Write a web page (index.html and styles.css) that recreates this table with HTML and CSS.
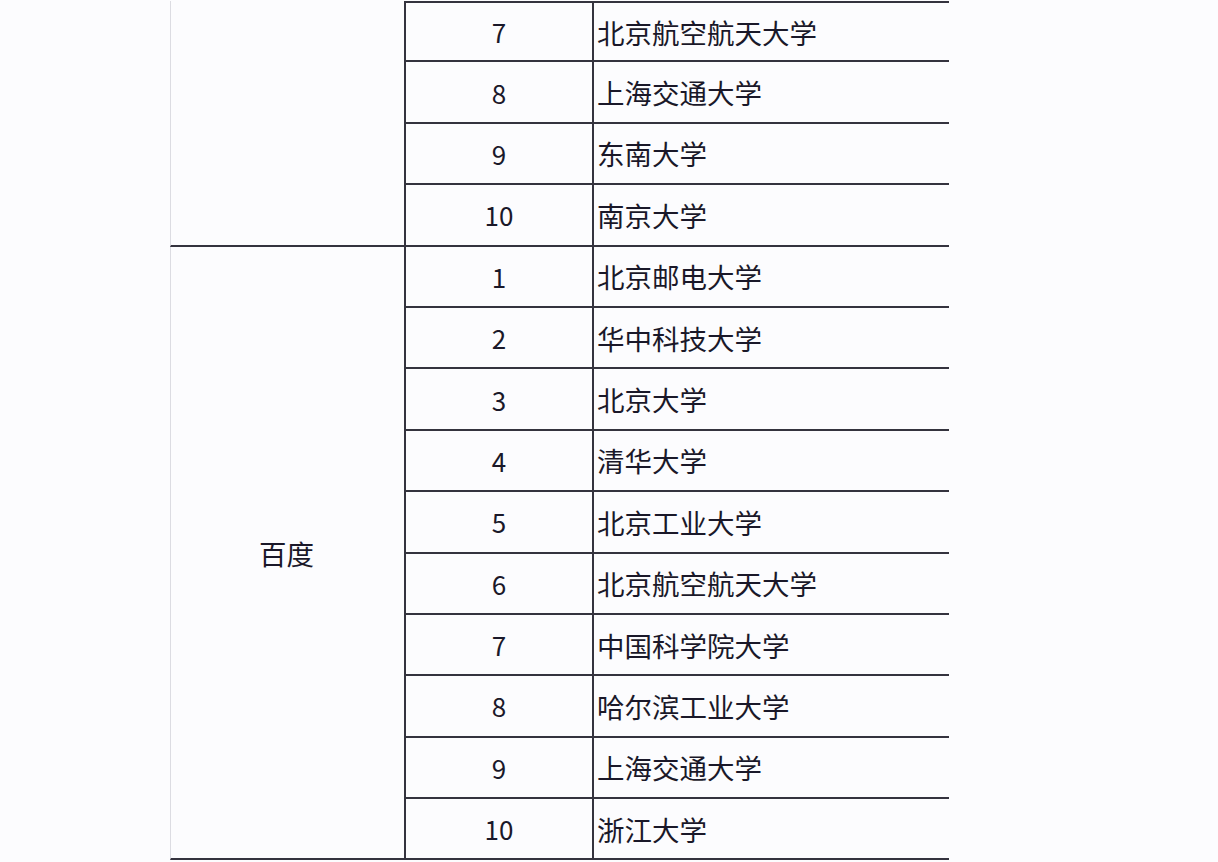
FILE: index.html
```html
<!DOCTYPE html>
<html lang="zh">
<head>
<meta charset="utf-8">
<link rel="stylesheet" href="styles.css">
</head>
<body>
<div class="sheet">
  <div class="company first"></div>
  <div class="rank top">7</div><div class="name top">北京航空航天大学</div>
  <div class="rank">8</div><div class="name">上海交通大学</div>
  <div class="rank">9</div><div class="name">东南大学</div>
  <div class="rank">10</div><div class="name">南京大学</div>
  <div class="company second">百度</div>
  <div class="rank">1</div><div class="name">北京邮电大学</div>
  <div class="rank">2</div><div class="name">华中科技大学</div>
  <div class="rank">3</div><div class="name">北京大学</div>
  <div class="rank">4</div><div class="name">清华大学</div>
  <div class="rank">5</div><div class="name">北京工业大学</div>
  <div class="rank">6</div><div class="name">北京航空航天大学</div>
  <div class="rank">7</div><div class="name">中国科学院大学</div>
  <div class="rank">8</div><div class="name">哈尔滨工业大学</div>
  <div class="rank">9</div><div class="name">上海交通大学</div>
  <div class="rank">10</div><div class="name">浙江大学</div>
</div>
</body>
</html>
```
FILE: styles.css
```css
html, body {
  margin: 0;
  padding: 0;
  background: #fcfcfe;
}
body {
  width: 1218px;
  height: 862px;
  overflow: hidden;
  font-family: "Noto Sans CJK SC", "Noto Sans", sans-serif;
  color: #1a1829;
}
.sheet {
  margin-left: 170px;
  padding-top: 1px;
  display: grid;
  grid-template-columns: 234px 188px 357px;
  grid-template-rows: repeat(14, 61.4px);
}
.cell {
  box-sizing: border-box;
}
.sheet > div {
  box-sizing: border-box;
  display: flex;
  align-items: center;
  font-size: 27.5px;
  font-weight: 400;
  border-bottom: 2px solid #34333e;
}
.company {
  grid-column: 1;
  justify-content: center;
  border-left: 1px solid #dcdce2;
  padding-right: 2px;
}
.company.first {
  grid-row: 1 / span 4;
}
.company.second {
  grid-row: 5 / span 10;
}
.sheet > .rank {
  grid-column: 2;
  justify-content: center;
  border-left: 2px solid #34333e;
  font-size: 26px;
}
.name {
  grid-column: 3;
  border-left: 2px solid #34333e;
  padding-left: 3px;
}
.sheet > .top {
  border-top: 2px solid #34333e;
}
```
